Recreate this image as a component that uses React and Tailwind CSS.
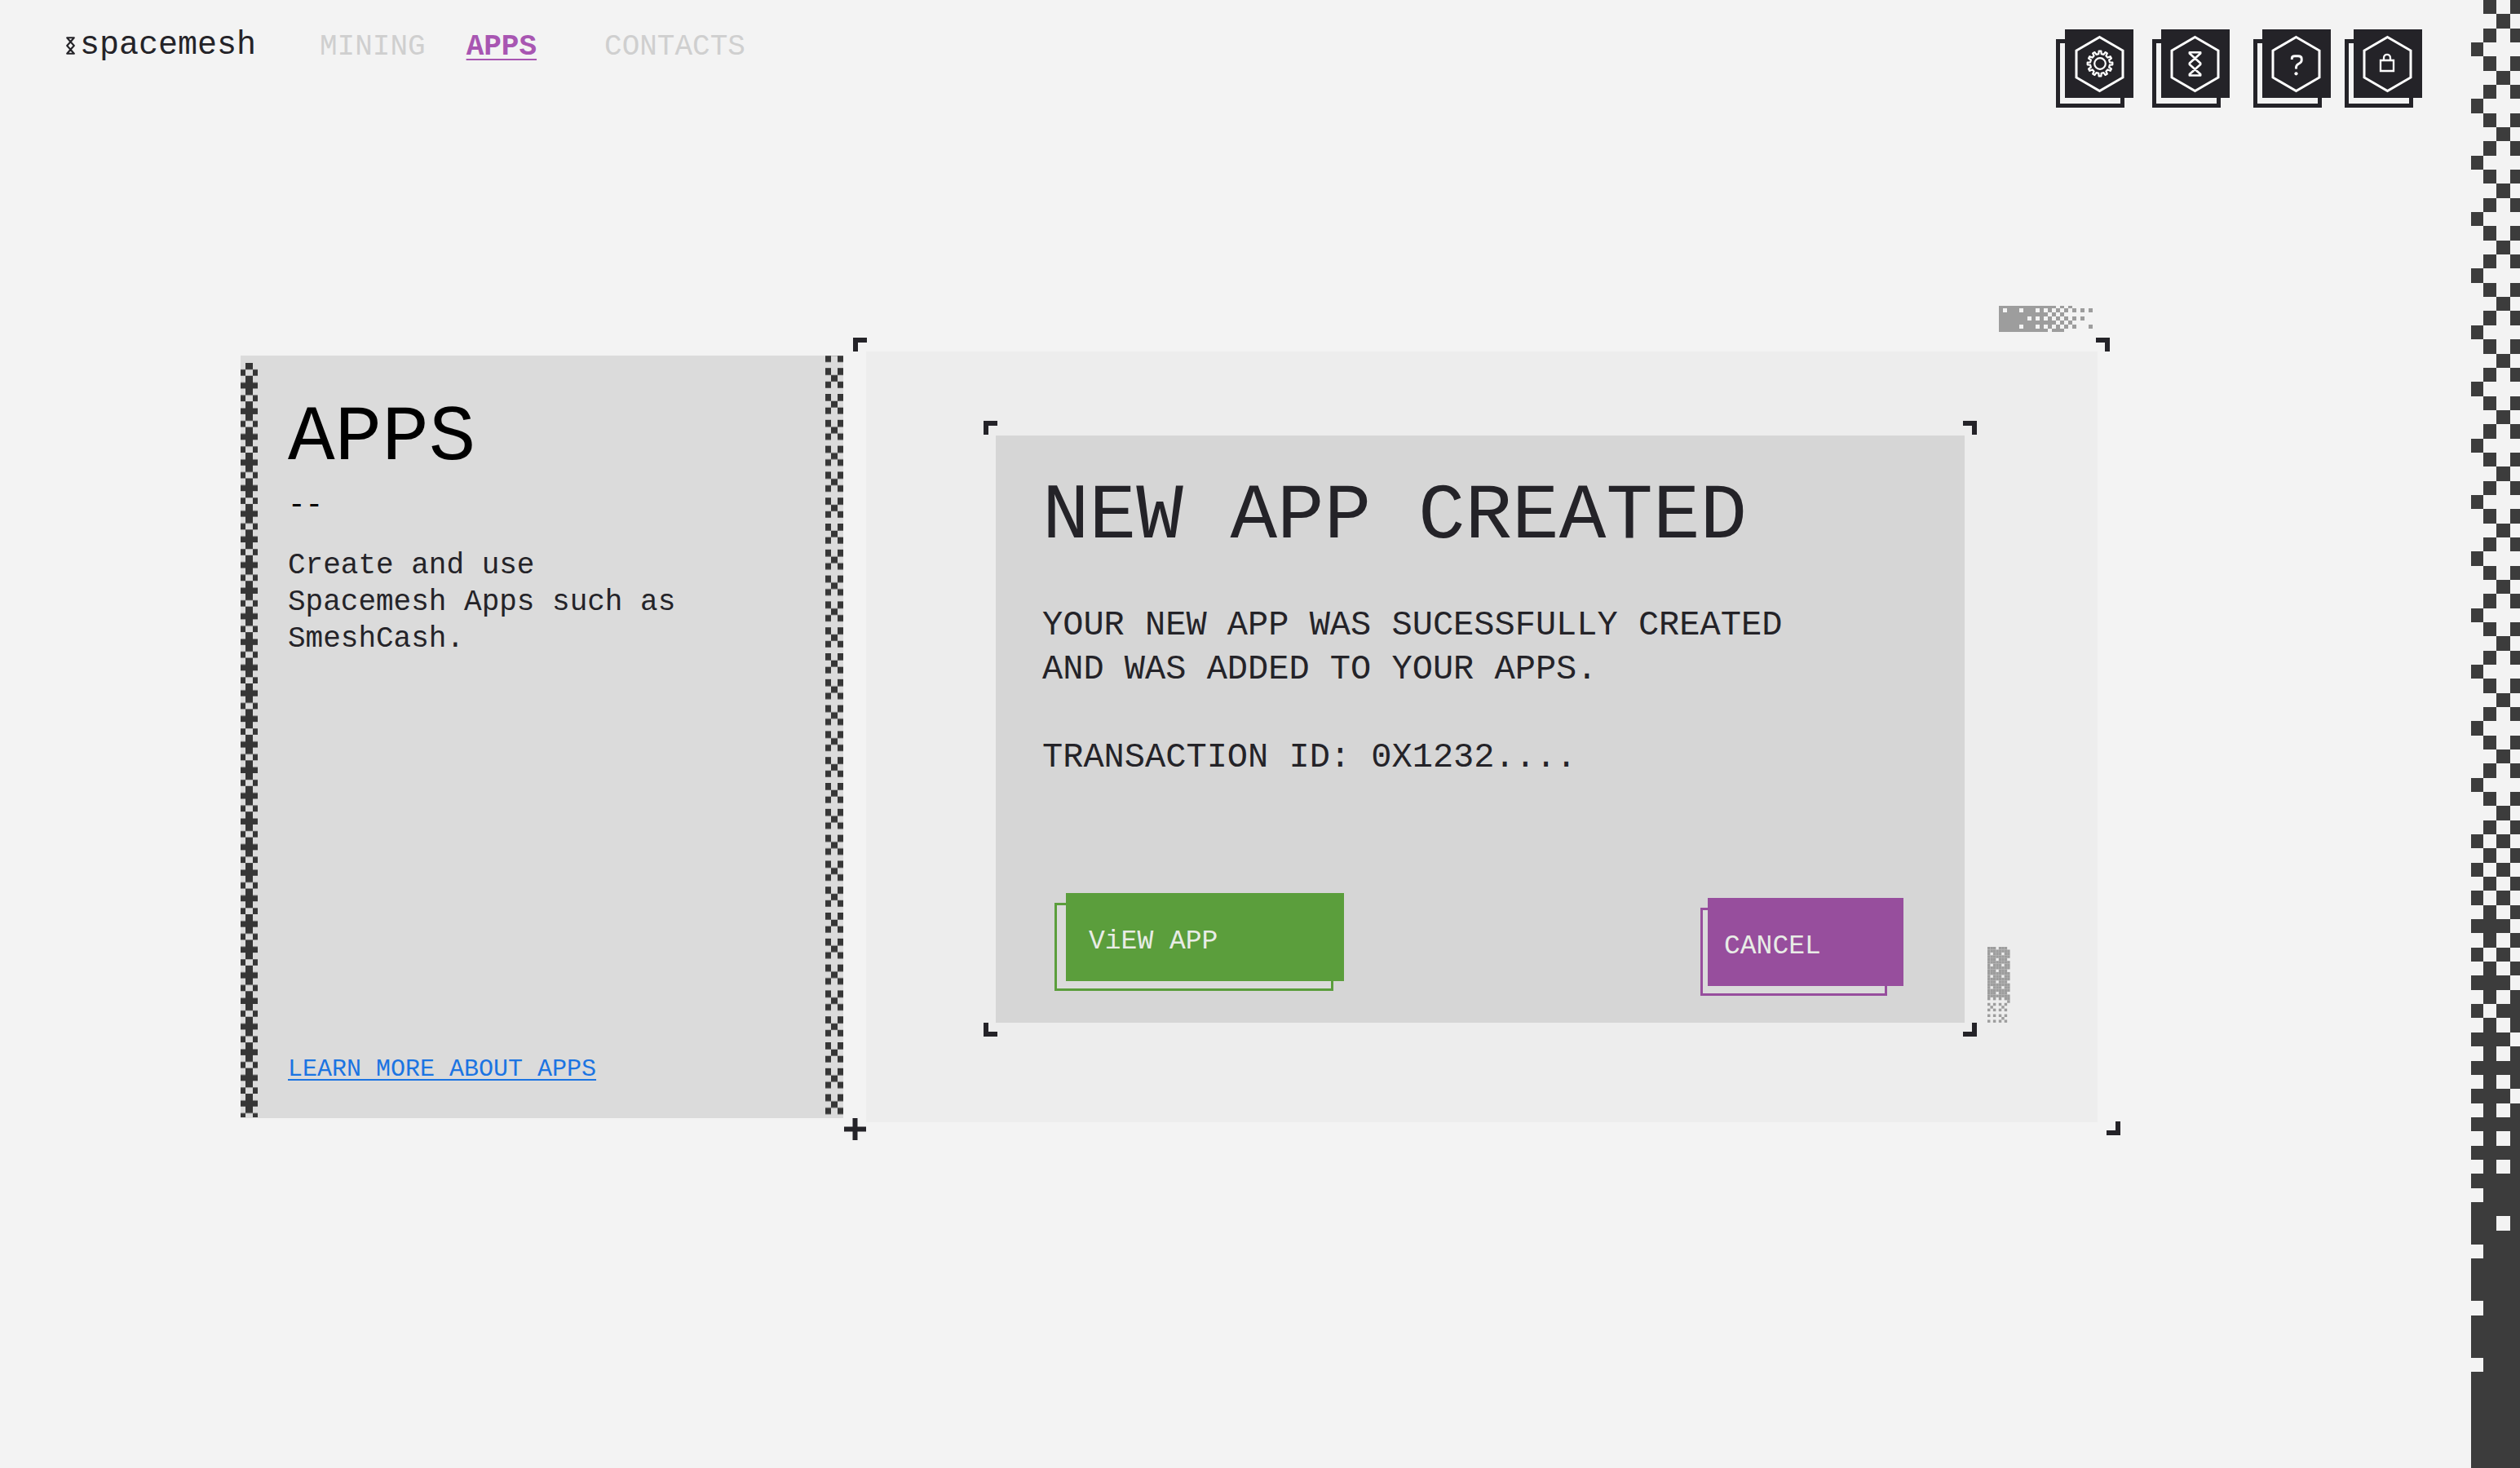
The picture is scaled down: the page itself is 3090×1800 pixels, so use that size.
import React from "react";

const INK = "#242328";

const STRIP_TOP = [".#.#", "..#.", ".#.#", "#..."];
const STRIP_TAIL = [
  ".#.#", "#.#.", ".#.#", "#.#.", ".#.#", "###.", ".#.#", "#.#.", ".#.#", "###.", ".#.#",
  "#.##", ".#.#", "###.", ".#.#", "####", ".#.#", "###.", ".#.#", "####", ".#.#", "####",
  ".#.#", "####", ".###", "####", "##.#", "####", ".###", "####", "####", "####", ".###",
  "####", "####", "####", ".###",
];
const STRIP_ROWS = [
  ...Array.from({ length: 59 }, (_, i) => STRIP_TOP[i % 4]),
  "#.#.",
  ...STRIP_TAIL,
];

const FADE_WIDE = [
  "##############.#.#.....",
  "#.###.###.#.#.#.#.#.#.#",
  "############.#.#.......",
  "#######.#.#.#.#.#.#.#..",
  "##############.#.#.....",
  "#####.###.#.#.#.#.#...#",
  "############.###.......",
];

const FADE_TALL = [
  "###.###.", "########", "#.###.##", "########", "###.###.", "########", "#.###.##",
  "########", "###.###.", "########", "#.###.##", "########", "###.###.", "########",
  "#.###.##", "########", "###.###.", "########", "#.#.#.##", ".......#", "#.#.#.#.",
  ".#...#..", "#.#.#.#.", "........", "#.#.#.#.", ".....#..", "#.#.#.#.",
];

/* Draws '#' cells of a text bitmap, with cell borders given by xs and ys. */
function Bitmap({ rows, xs, ys, fill, className }) {
  const w = xs[xs.length - 1];
  const h = ys[rows.length];
  return (
    <svg width={w} height={h} viewBox={`0 0 ${w} ${h}`} className={className} aria-hidden="true">
      {rows.flatMap((row, r) =>
        [...row].map((c, i) =>
          c === "#" ? (
            <rect key={`${r}-${i}`} x={xs[i]} y={ys[r]} width={xs[i + 1] - xs[i]} height={ys[r + 1] - ys[r]} fill={fill} />
          ) : null
        )
      )}
    </svg>
  );
}

const steps = (n, size) => Array.from({ length: n + 1 }, (_, i) => i * size);

function Corner({ turn, className }) {
  return (
    <svg width="17" height="17" viewBox="0 0 17 17" className={`absolute ${className}`} aria-hidden="true">
      <path d="M0 0H17V6H6V17H0Z" fill={INK} transform={`rotate(${turn} 8.5 8.5)`} />
    </svg>
  );
}

function gearPath(cx, cy, outer, inner, teeth) {
  const pts = [];
  const step = (Math.PI * 2) / teeth;
  for (let i = 0; i < teeth; i++) {
    const a = i * step - Math.PI / 2;
    [
      [inner, -0.27],
      [outer, -0.17],
      [outer, 0.17],
      [inner, 0.27],
    ].forEach(([r, f]) => {
      pts.push(`${(cx + r * Math.cos(a + f * step)).toFixed(2)} ${(cy + r * Math.sin(a + f * step)).toFixed(2)}`);
    });
  }
  return `M${pts.join("L")}Z`;
}

const GEAR = gearPath(43, 42, 15.4, 12, 12);

function IconButton({ label, hexX = 0, children }) {
  return (
    <button type="button" aria-label={label} className="relative h-24 w-[95px] pb-3 pl-[11px]">
      <span className="absolute bottom-0 left-0 h-[84px] w-[84px] border-[5px] border-[#242328]" />
      <span className="relative block h-[84px] w-[84px] bg-[#242328]">
        <svg width="84" height="84" viewBox="0 0 84 84" fill="none" stroke="#fff">
          <path d="M41.5 9.5L70 26V59L41.5 75.5L13 59V26Z" strokeWidth="3" transform={`translate(${hexX} 0)`} />
          {children}
        </svg>
      </span>
    </button>
  );
}

function Header() {
  return (
    <header className="flex items-start pl-[81px] pr-[60px] pt-9">
      <a href="#home" className="flex h-10 w-[311px] items-center gap-1.5 font-['Liberation_Mono',monospace] text-[40px] leading-10 text-[#242328]">
        <svg width="11" height="22" viewBox="0 0 11 22" fill="none" stroke={INK} strokeWidth="2.1" strokeLinejoin="round" aria-hidden="true">
          <path d="M1.2 1.2H9.8L5.5 6.3Z M5.5 6.3L9.8 11L5.5 15.7L1.2 11Z M5.5 15.7L9.8 20.8H1.2Z" />
        </svg>
        spacemesh
      </a>
      <nav className="flex pt-0.5 text-4xl leading-10 text-[#cfcfcf]">
        <a href="#mining" className="mr-[50px]">MINING</a>
        <a href="#apps" aria-current="page" className="mr-[83px] font-bold text-[#a856b2] underline decoration-2 underline-offset-[5px]">APPS</a>
        <a href="#contacts">CONTACTS</a>
      </nav>
      <div className="ml-auto flex">
        <div className="mr-[23px]">
          <IconButton label="Settings" hexX={1}>
            <path d={GEAR} strokeWidth="2.2" strokeLinejoin="round" />
            <circle cx="43" cy="42" r="6.8" strokeWidth="2.2" />
          </IconButton>
        </div>
        <div className="mr-[29px]">
          <IconButton label="Network">
            <path d="M34.8 28.3H48.2V29.5L34.8 41.5V43L48.2 55V56.5H34.8V55L48.2 43V41.5L34.8 29.5Z" strokeWidth="2.6" strokeLinejoin="round" />
          </IconButton>
        </div>
        <div className="mr-[17px]">
          <IconButton label="Help">
            <path d="M36.3 37V35.5C36.3 33.5 38 32.8 40 32.8H44C47 32.8 48.2 34 48.2 36V38C48.2 40.5 46.5 41.3 44.6 42.2C42.4 43.3 41.5 44.3 41.5 46.5V48.5" strokeWidth="2.9" />
            <circle cx="41.5" cy="54.3" r="2.1" fill="#fff" stroke="none" />
          </IconButton>
        </div>
        <IconButton label="Lock">
          <path d="M33 38H49V51H33Z" strokeWidth="2.3" />
          <path d="M37 38V35C37 29.5 45 29.5 45 35V38" strokeWidth="2.3" />
        </IconButton>
      </div>
    </header>
  );
}

function CardEdges() {
  return (
    <>
      <svg className="absolute bottom-px left-0 top-[9px] h-[calc(100%-10px)] w-[21px]" aria-hidden="true">
        <defs>
          <pattern id="edge-plus" width="21" height="31.44" patternUnits="userSpaceOnUse">
            <path d="M6 0H15V8H6Z M0 8H6V15.7H0Z M15 8H21V15.7H15Z M6 15.7H15V31.5H6Z M0 24H21V31.5H0Z" fill="#363636" />
          </pattern>
        </defs>
        <rect width="100%" height="100%" fill="url(#edge-plus)" />
      </svg>
      <svg className="absolute bottom-1 right-0 top-0 h-[calc(100%-4px)] w-[22px]" aria-hidden="true">
        <defs>
          <pattern id="edge-cross" y="-16.6" width="22" height="31.8" patternUnits="userSpaceOnUse">
            <path d="M0 0H7V8.6H0Z M15 0H22V8.6H15Z M7 8.6H15V16.6H7Z M0 16.6H7V24.6H0Z M15 16.6H22V24.6H15Z" fill="#363636" />
          </pattern>
        </defs>
        <rect width="100%" height="100%" fill="url(#edge-cross)" />
      </svg>
    </>
  );
}

function AppsCard() {
  return (
    <section className="relative mb-[5px] mt-[5px] flex w-[739px] shrink-0 flex-col bg-[#dbdbdb] pb-[37px] pl-[58px] pr-32 pt-[54px]">
      <CardEdges />
      <h1 className="text-8xl leading-none text-black">APPS</h1>
      <p className="mt-[11px] text-4xl leading-[45px] text-black">--</p>
      <p className="mt-[29px] text-4xl leading-[45px]">
        Create and use
        <br />
        Spacemesh Apps such as
        <br />
        SmeshCash.
      </p>
      <a href="#learn" className="mt-auto text-3xl leading-[45px] text-[#1b74e2] underline decoration-2 underline-offset-4">
        LEARN MORE ABOUT APPS
      </a>
    </section>
  );
}

function Dialog() {
  return (
    <div className="relative bg-[#d6d6d6] pb-[33px] pl-[57px] pr-[75px] pt-[52px]">
      <Corner turn={0} className="-left-[15px] -top-[18px]" />
      <Corner turn={90} className="-right-[15px] -top-[18px]" />
      <Corner turn={270} className="-bottom-[17px] -left-[15px]" />
      <Corner turn={180} className="-bottom-[17px] -right-[15px]" />
      <h2 className="text-8xl leading-none">NEW APP CREATED</h2>
      <p className="mt-[58px] text-[42px] leading-[54px]">
        YOUR NEW APP WAS SUCESSFULLY CREATED
        <br />
        AND WAS ADDED TO YOUR APPS.
      </p>
      <p className="mt-[54px] text-[42px] leading-[54px]">TRANSACTION ID: 0X1232....</p>
      <div className="mt-[139px] flex items-start justify-between pl-[15px] text-[33px] leading-9 text-[#e8ece6]">
        <button type="button" className="relative pb-3 pl-[14px] text-left">
          <span className="absolute bottom-0 left-0 right-[13px] top-3 border-[3px] border-[#5b9e3c] bg-[#dbdbdb]" />
          <span className="relative flex h-[108px] w-[341px] items-center bg-[#5b9e3c] pl-7 pt-3">ViEW APP</span>
        </button>
        <button type="button" className="relative mt-[6px] pb-3 pl-[9px] text-left">
          <span className="absolute bottom-0 left-0 right-5 top-3 border-[3px] border-[#974e9d] bg-[#dbdbdb]" />
          <span className="relative flex h-[108px] w-[240px] items-center bg-[#974e9d] pl-5 pt-3">CANCEL</span>
        </button>
      </div>
    </div>
  );
}

export default function App() {
  return (
    <div className="flex min-h-screen bg-[#f3f3f3] font-['Liberation_Mono',monospace] text-[#242328]">
      <div className="flex flex-1 flex-col">
        <Header />
        <main className="mt-[299px] flex pl-[295px] pr-[458px]">
          <AppsCard />
          <section className="relative ml-7 flex-1 bg-[#ededed] pb-[122px] pl-[159px] pr-[163px] pt-[103px]">
            <Corner turn={0} className="-left-4 -top-[17px]" />
            <Corner turn={90} className="-right-[15px] -top-[17px]" />
            <Corner turn={180} className="-bottom-4 -right-[28px]" />
            <svg width="27" height="27" viewBox="0 0 27 27" className="absolute -bottom-[22px] -left-[27px]" aria-hidden="true">
              <path d="M10.5 0H16.5V10.5H27V16.5H16.5V27H10.5V16.5H0V10.5H10.5Z" fill={INK} />
            </svg>
            <Bitmap
              rows={FADE_WIDE}
              xs={steps(23, 5)}
              ys={[0, 3, 8, 13, 18, 23, 28, 32]}
              fill="#9d9d9d"
              className="absolute -top-14 right-[6px]"
            />
            <Dialog />
            <Bitmap
              rows={FADE_TALL}
              xs={steps(8, 3.45)}
              ys={steps(27, 3.44)}
              fill="#9d9d9d"
              className="absolute bottom-[122px] right-[107px]"
            />
          </section>
        </main>
      </div>
      <aside className="w-[60px] shrink-0 bg-[#3c3c3c]">
        <div className="bg-[#f3f3f3]">
          <Bitmap
            rows={STRIP_ROWS}
            xs={[0, 15, 31, 48, 60]}
            ys={Array.from({ length: STRIP_ROWS.length + 1 }, (_, i) => Math.round(i * 17.34))}
            fill="#3c3c3c"
            className="block"
          />
        </div>
      </aside>
    </div>
  );
}
